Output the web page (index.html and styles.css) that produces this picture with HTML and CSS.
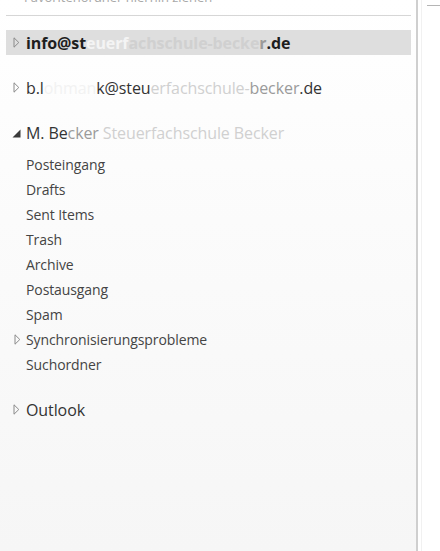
FILE: index.html
```html
<!DOCTYPE html>
<html lang="de">
<head>
<meta charset="utf-8">
<link rel="stylesheet" href="styles.css">
</head>
<body>
<div class="app">
  <div class="nav">
    <div class="fav">Favoritenordner hierhin ziehen</div>
    <div class="rule"></div>
    <div class="tree">
      <div class="row account selected">
        <span class="tw"><svg width="7" height="11" viewBox="0 0 7 11"><path d="M1 0.8 L5.8 5.5 L1 10.2 Z" fill="none" stroke="#8a8a8a" stroke-width="1"/></svg></span>
        <span class="label bold">info@st<span class="blur-w">euerf</span><span class="blur-l">achschule-becke</span><span class="blur-m">r</span>.de</span>
      </div>
      <div class="row account">
        <span class="tw"><svg width="7" height="11" viewBox="0 0 7 11"><path d="M1 0.8 L5.8 5.5 L1 10.2 Z" fill="none" stroke="#8a8a8a" stroke-width="1"/></svg></span>
        <span class="label">b.l<span class="blur-w">ohman</span>k@steu<span class="blur-l">erfachschule-</span><span class="blur-m">becker</span>.de</span>
      </div>
      <div class="row account open">
        <span class="tw"><svg width="9" height="9" viewBox="0 0 9 9"><path d="M8.5 0.5 L8.5 8.5 L0.5 8.5 Z" fill="#3a3a3a"/></svg></span>
        <span class="label">M. Be<span class="blur-m">cker</span><span class="blur-l"> Steuerfachschule Becker</span></span>
      </div>
      <div class="folders">
        <div class="row folder"><span class="label">Posteingang</span></div>
        <div class="row folder"><span class="label">Drafts</span></div>
        <div class="row folder"><span class="label">Sent Items</span></div>
        <div class="row folder"><span class="label">Trash</span></div>
        <div class="row folder"><span class="label">Archive</span></div>
        <div class="row folder"><span class="label">Postausgang</span></div>
        <div class="row folder"><span class="label">Spam</span></div>
        <div class="row folder"><span class="sub"><svg width="7" height="11" viewBox="0 0 7 11"><path d="M1 0.8 L5.8 5.5 L1 10.2 Z" fill="none" stroke="#8a8a8a" stroke-width="1"/></svg></span><span class="label">Synchronisierungsprobleme</span></div>
        <div class="row folder"><span class="label">Suchordner</span></div>
      </div>
      <div class="row account">
        <span class="tw"><svg width="7" height="11" viewBox="0 0 7 11"><path d="M1 0.8 L5.8 5.5 L1 10.2 Z" fill="none" stroke="#8a8a8a" stroke-width="1"/></svg></span>
        <span class="label">Outlook</span>
      </div>
    </div>
  </div>
  <div class="side">
    <div class="side-mark"></div>
  </div>
</div>
</body>
</html>
```

FILE: styles.css
```css
* { box-sizing: border-box; }
html, body { margin: 0; padding: 0; }
body {
  width: 440px;
  height: 551px;
  overflow: hidden;
  font-family: "Open Sans", "Noto Sans", sans-serif;
  background: #ffffff;
}
.app {
  display: flex;
  height: 551px;
}
.nav {
  width: 418px;
  flex: none;
  border-right: 2px solid #cfcfcf;
  background: linear-gradient(#ffffff 0%, #fbfbfb 40%, #f6f6f6 100%);
  padding-left: 6px;
  padding-right: 5px;
}
.fav {
  margin-top: -10px;
  height: 15px;
  padding-left: 18px;
  font-size: 13px;
  line-height: 15px;
  color: #a8a8a8;
  white-space: nowrap;
  overflow: hidden;
}
.rule {
  margin-top: 10px;
  height: 1px;
  background: #d6d6d6;
}
.tree {
  padding-top: 14px;
}
.row {
  display: flex;
  align-items: center;
  height: 25px;
  white-space: nowrap;
}
.account {
  font-size: 16px;
  color: #333333;
  margin-bottom: 20px;
}
.selected { background: #dedede; }
.open { margin-bottom: 7px; }
.folders { margin-bottom: 20px; }
.folder {
  font-size: 14px;
  color: #444444;
  padding-left: 20px;
  position: relative;
}
.label { letter-spacing: -0.1px; }
.bold { font-weight: 700; color: #1e1e1e; letter-spacing: -0.1px; }
.tw {
  width: 20px;
  flex: none;
  display: flex;
  align-items: center;
  padding-left: 7px;
}
.open .tw { padding-left: 6px; margin-top: 1px; }
.tw svg, .sub svg { display: block; }
.sub {
  position: absolute;
  left: 8px;
  top: 7px;
}
.blur-w { color: #f2f2f2; }
.selected .blur-w { color: #f4f4f4; }
.blur-l { color: #d0d0d0; }
.blur-m { color: #9a9a9a; }
.side {
  flex: 1;
  background: #ffffff;
  border-left: 1px solid #f1f1f1;
  margin-left: 3px;
  position: relative;
}
.side-mark {
  margin-top: 5px;
  margin-left: 5px;
  height: 1px;
  background: #b5b5b5;
}
```
